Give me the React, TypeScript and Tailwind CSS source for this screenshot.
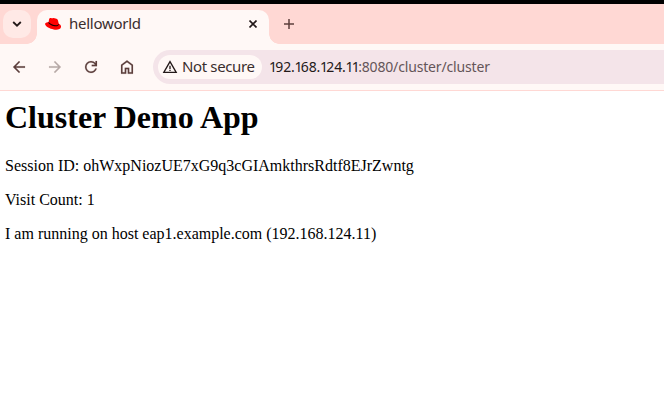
import React from "react";

const uiFont = "font-['Noto_Sans','Open_Sans',sans-serif]";

function Glyph({ d, className }: { d: string; className: string }) {
  return (
    <svg viewBox="0 0 24 24" fill="currentColor" className={className} aria-hidden="true">
      <path d={d} />
    </svg>
  );
}

function RedHat() {
  return (
    <svg viewBox="0 0 16 16" className="h-4 w-4 shrink-0" aria-hidden="true">
      <path
        fill="#ff0000"
        d="M4.2 3.1C4.5 2 5.5 1.9 6.5 2.2C7.3 2.5 7.8 1.8 8.7 1.9C9.8 2 11.4 2.5 12.3 3.3C13.2 4.2 13.3 6.3 13.8 7.8C15.3 8.5 16.2 9.7 16 11C15.7 13.3 12.3 14.1 8.7 13.4C4.7 12.7.6 10.4.1 8.2C-.2 6.8 1.6 6.2 3.5 6.2Z"
      />
      <path
        fill="#160000"
        d="M3.6 5.9C5.4 8.2 9.9 9.8 12.7 8.9C13.4 8.7 13.6 8.2 13.5 7.6L13.9 8.6C13.5 10.5 11.1 10.7 8.4 9.9C5.6 9.1 3 7.2 3.4 6.4Z"
      />
    </svg>
  );
}

function TabStrip() {
  return (
    <div className="flex h-10 items-stretch bg-[#ffd8d4] pl-[3px] pt-1.5">
      <button className="flex h-7 w-7 items-center justify-center rounded-[10px] bg-[#ffe9e6] text-[#231919]">
        <svg viewBox="0 0 10 10" className="h-2.5 w-2.5" fill="none" stroke="currentColor" strokeWidth="1.8">
          <path d="M1.2 3 5 6.7 8.8 3" />
        </svg>
      </button>
      <div className="relative ml-1.5 flex h-[34px] w-[232px] items-start rounded-t-[10px] bg-[#fff8f6] pl-2">
        <div className="absolute -left-2.5 bottom-0 h-2.5 w-2.5 bg-[radial-gradient(circle_at_0_0,transparent_9.5px,#fff8f6_10px)]" />
        <div className="absolute -right-2.5 bottom-0 h-2.5 w-2.5 bg-[radial-gradient(circle_at_100%_0,transparent_9.5px,#fff8f6_10px)]" />
        <div className="flex h-7 w-full items-center">
          <RedHat />
          <span className="ml-2 pb-0.5 text-[15px] leading-5 tracking-[-0.26px] text-[#3a2d2d]">helloworld</span>
          <svg viewBox="0 0 8 8" className="ml-auto mr-3 h-2 w-2 text-[#231919]" fill="none" stroke="currentColor" strokeWidth="1.6">
            <path d="M.5.5 7.5 7.5M7.5.5.5 7.5" />
          </svg>
        </div>
      </div>
      <button className="ml-[15px] flex h-7 w-2.5 items-center text-[#5d3f3c]">
        <svg viewBox="0 0 10 10" className="h-2.5 w-2.5" fill="none" stroke="currentColor" strokeWidth="1.5">
          <path d="M5 0V10M0 5H10" />
        </svg>
      </button>
    </div>
  );
}

function HostName({ host }: { host: string }) {
  return (
    <span className="text-[#231919]">
      {host.split("").map((char, index) => (
        <span key={index} className={char === "1" ? "tracking-[-1.7px]" : "tracking-[-0.2px]"}>
          {char}
        </span>
      ))}
    </span>
  );
}

function Toolbar() {
  return (
    <div className="flex h-[47px] items-center border-b border-[#ffd8d4] bg-[#fff8f6] pl-2.5">
      <nav className="flex gap-[18px] text-[#5d3f3c]">
        <Glyph className="h-[18px] w-[18px] stroke-current stroke-[0.2]" d="M20 11H7.83l5.59-5.59L12 4l-8 8 8 8 1.41-1.41L7.83 13H20z" />
        <Glyph className="h-[18px] w-[18px] stroke-current stroke-[0.2] text-[#b7a9a7]" d="m12 4-1.41 1.41L16.17 11H4v2h12.17l-5.58 5.59L12 20l8-8z" />
        <Glyph className="h-[18px] w-[18px] stroke-current stroke-[0.2]" d="M12 20q-3.35 0-5.675-2.325T4 12t2.325-5.675T12 4q1.725 0 3.3.713T18 6.75V4h2v7h-7V9h4.2q-.8-1.4-2.187-2.2T12 6Q9.5 6 7.75 7.75T6 12t1.75 4.25T12 18q1.925 0 3.475-1.1T17.65 14h2.1q-.7 2.65-2.85 4.325T12 20" />
        <Glyph className="h-[18px] w-[18px] stroke-current stroke-[0.2]" d="M6 19h3v-6h6v6h3v-9l-6-4.5L6 10zm-2 2V9l8-6 8 6v12h-7v-6h-2v6z" />
      </nav>
      <div className="ml-[17px] flex h-[34px] flex-1 items-center rounded-l-full bg-[#f4e4e9] pl-[5px]">
        <div className="flex h-6 w-[104px] items-center rounded-full bg-[#fff8f6] pl-1 text-[#231919]">
          <Glyph className="h-4 w-4 shrink-0" d="M1 21 12 2l11 19zm3.45-2h15.1L12 6zM11 18h2v-2h-2zm0-3h2v-5h-2z" />
          <span className="ml-1 whitespace-nowrap pb-0.5 text-[15px] leading-5 tracking-[-0.37px] text-[#3a2d2d]">Not secure</span>
        </div>
        <span className="ml-[7px] whitespace-nowrap text-[14px] leading-5 tracking-[-0.16px] text-[#645558]">
          <HostName host="192.168.124.11" />:8080/cluster/cluster
        </span>
      </div>
    </div>
  );
}

export default function App() {
  return (
    <div className={`flex h-[412px] w-[664px] flex-col overflow-hidden bg-white ${uiFont}`}>
      <div className="h-1 bg-black" />
      <TabStrip />
      <Toolbar />
      <main className="flex flex-col gap-4 pl-[5px] pt-2 font-['Liberation_Serif','Times_New_Roman',serif] text-base leading-[18px] text-black">
        <h1 className="mb-1.5 text-[32px] font-bold leading-9">Cluster Demo App</h1>
        <p>Session ID: ohWxpNiozUE7xG9q3cGIAmkthrsRdtf8EJrZwntg</p>
        <p>Visit Count: 1</p>
        <p>I am running on host eap1.example.com (192.168.124.11)</p>
      </main>
    </div>
  );
}
